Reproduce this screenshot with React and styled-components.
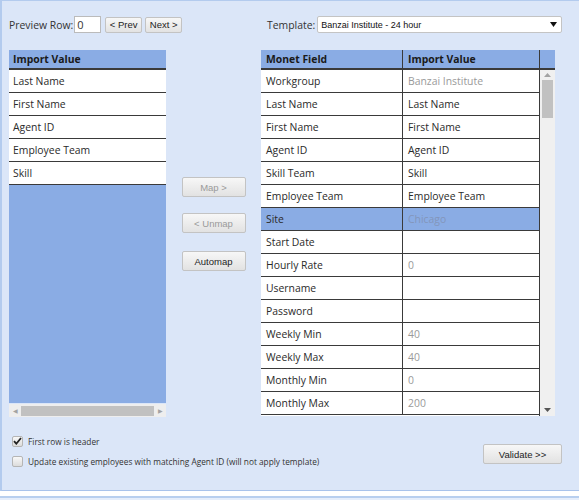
import React from "react";
import styled, { createGlobalStyle } from "styled-components";

const Global = createGlobalStyle`
  html, body { margin: 0; padding: 0; background: #ffffff; }
  body { font-family: "Open Sans", "Noto Sans", sans-serif; font-size: 10.4px; color: #333; }
`;

const Page = styled.div`
  width: 579px;
  height: 500px;
  overflow: hidden;
`;

const Panel = styled.div`
  box-sizing: border-box;
  height: 491px;
  background: #dbe6f8;
  border-top: 1px solid #b3cbee;
  border-left: 2px solid #b3cbee;
  border-bottom: 1px solid #a9c3eb;
  padding: 15px 0 0 7px;
`;

const FootLine = styled.div`
  margin-top: 5px;
  border-top: 2px solid #b8cfef;
  height: 3px;
  background: #e6eefb;
`;

const TopBar = styled.div`
  display: flex;
  align-items: center;
  height: 17px;
`;

const Label = styled.span`
  color: #333;
  font-size: 10.4px;
  margin-right: ${(p) => p.$gap || 3}px;
`;

const RowInput = styled.div`
  box-sizing: border-box;
  width: 27px;
  height: 17px;
  background: #fff;
  border: 1px solid #bbb;
  font-size: 11px;
  line-height: 15px;
  padding-left: 2px;
  margin-right: 4px;
`;

const Btn = styled.button`
  box-sizing: border-box;
  flex-shrink: 0;
  width: ${(p) => p.$w}px;
  height: ${(p) => p.$h || 20}px;
  margin-right: ${(p) => p.$mr || 0}px;
  margin-top: ${(p) => p.$mt || 0}px;
  padding: 0;
  font-family: "Liberation Sans", Arial, sans-serif;
  font-size: 9.5px;
  color: ${(p) => (p.$dim ? "#9a9a9a" : "#222")};
  background: linear-gradient(#f7f7f7, #e2e2e2);
  border: 1px solid #c3c3c3;
  border-radius: 2px;
`;

const LeftTop = styled.div`
  display: flex;
  align-items: center;
  width: 258px;
  flex-shrink: 0;
`;

const Select = styled.div`
  box-sizing: border-box;
  flex-shrink: 0;
  width: 245px;
  height: 17px;
  display: flex;
  align-items: center;
  justify-content: space-between;
  background: #fff;
  border: 1px solid #c4c4c4;
  border-radius: 2px;
  padding: 0 4px 0 3px;
  font-family: "Liberation Sans", Arial, sans-serif;
  font-size: 9px;
  color: #111;
`;

const Main = styled.div`
  display: grid;
  grid-template-columns: 157px 95px 294px;
  margin-top: 17px;
`;

const LeftCol = styled.div`
  display: flex;
  flex-direction: column;
  height: 367px;
  background: #8aace4;
`;

const Head = styled.div`
  box-sizing: border-box;
  height: 20px;
  line-height: 18px;
  padding-left: 4px;
  font-weight: 700;
  color: #1a1a1a;
  background: #8aace4;
  border-bottom: 2px solid #3a3a3a;
`;

const Cell = styled.div`
  box-sizing: border-box;
  height: 23px;
  line-height: 22px;
  padding-left: ${(p) => p.$pl || 4}px;
  background: ${(p) => (p.$sel ? "#8aace4" : "#fff")};
  border-bottom: 1px solid #3a3a3a;
  color: ${(p) => (p.$dim ? (p.$sel ? "#8396bb" : "#9a9a9a") : "#2a2a2a")};
  white-space: nowrap;
  overflow: hidden;
`;

const Filler = styled.div`
  flex: 1;
`;

const HScroll = styled.div`
  display: flex;
  align-items: center;
  height: 13px;
  background: #eeeeee;
  border-top: 1px solid #dbe6f8;
`;

const Arrow = styled.span`
  width: 12px;
  text-align: center;
  font-size: 6px;
  color: #a3a3a3;
`;

const HThumb = styled.div`
  flex: 1;
  height: 10px;
  background: #c1c1c1;
`;

const MidCol = styled.div`
  display: flex;
  flex-direction: column;
  align-items: center;
  padding-top: 127px;
`;

const RightCol = styled.div`
  display: flex;
  flex-direction: column;
  height: 366px;
`;

const RHead = styled.div`
  display: grid;
  grid-template-columns: 142px 137px 15px;
  height: 20px;
  background: #8aace4;
  border-bottom: 2px solid #3a3a3a;
  box-sizing: border-box;
  font-weight: 700;
  color: #1a1a1a;
  line-height: 18px;
`;

const HCell = styled.div`
  padding-left: 5px;
  border-right: ${(p) => (p.$last ? "none" : "1px solid #3a3a3a")};
`;

const Body = styled.div`
  display: flex;
  flex: 1;
  overflow: hidden;
`;

const Rows = styled.div`
  width: 279px;
  background: #fff;
  border-right: 1px solid #3a3a3a;
  box-sizing: border-box;
`;

const Row = styled.div`
  display: grid;
  grid-template-columns: 142px 136px;
  box-shadow: ${(p) => (p.$sel ? "inset 1px 1px 0 #222, inset 0 2px 0 #222" : "none")};
  & > div:first-child {
    border-right: 1px solid #3a3a3a;
  }
`;

const VScroll = styled.div`
  display: flex;
  flex-direction: column;
  align-items: center;
  width: 15px;
  background: #f0f0f0;
  padding-top: 3px;
`;

const VThumb = styled.div`
  width: 11px;
  height: 38px;
  margin-top: 3px;
  background: #c1c1c1;
`;

const Checks = styled.div`
  display: flex;
  align-items: flex-start;
  justify-content: space-between;
  margin-top: 17px;
  padding-right: 17px;
`;

const CheckList = styled.div`
  display: flex;
  flex-direction: column;
  gap: 6px;
  padding-left: 3px;
`;

const CheckRow = styled.label`
  display: flex;
  align-items: center;
  height: 14px;
  font-size: 8.3px;
  color: #333;
`;

const Box = styled.span`
  box-sizing: border-box;
  width: 11px;
  height: 11px;
  margin-right: 5px;
  border: 1px solid #b5b5b5;
  border-radius: 2px;
  background: linear-gradient(#f8f8f8, #dcdcdc);
  display: flex;
  align-items: center;
  justify-content: center;
`;

const ValidateWrap = styled.div`
  padding-top: 10px;
`;

const leftRows = ["Last Name", "First Name", "Agent ID", "Employee Team", "Skill"];

const fields = [
  ["Workgroup", "Banzai Institute", true],
  ["Last Name", "Last Name"],
  ["First Name", "First Name"],
  ["Agent ID", "Agent ID"],
  ["Skill Team", "Skill"],
  ["Employee Team", "Employee Team"],
  ["Site", "Chicago", true, true],
  ["Start Date", ""],
  ["Hourly Rate", "0", true],
  ["Username", ""],
  ["Password", ""],
  ["Weekly Min", "40", true],
  ["Weekly Max", "40", true],
  ["Monthly Min", "0", true],
  ["Monthly Max", "200", true],
];

export default function App() {
  return (
    <Page>
      <Global />
      <Panel>
        <TopBar>
          <LeftTop>
            <Label $gap={1}>Preview Row:</Label>
            <RowInput>0</RowInput>
            <Btn $w={37} $h={16} $mr={3}>&lt; Prev</Btn>
            <Btn $w={37} $h={16}>Next &gt;</Btn>
          </LeftTop>
          <Label $gap={2}>Template:</Label>
          <Select>
            <span>Banzai Institute - 24 hour</span>
            <svg width="7" height="5" viewBox="0 0 7 5">
              <path d="M0 0h7L3.5 5z" fill="#111" />
            </svg>
          </Select>
        </TopBar>

        <Main>
          <LeftCol>
            <Head>Import Value</Head>
            {leftRows.map((r) => (
              <Cell key={r}>{r}</Cell>
            ))}
            <Filler />
            <HScroll>
              <Arrow>◀</Arrow>
              <HThumb />
              <Arrow>▶</Arrow>
            </HScroll>
          </LeftCol>

          <MidCol>
            <Btn $w={64} $dim>Map &gt;</Btn>
            <Btn $w={64} $dim $mt={16}>&lt; Unmap</Btn>
            <Btn $w={64} $mt={18}>Automap</Btn>
          </MidCol>

          <RightCol>
            <RHead>
              <HCell>Monet Field</HCell>
              <HCell>Import Value</HCell>
              <HCell $last />
            </RHead>
            <Body>
              <Rows>
                {fields.map(([f, v, dim, sel]) => (
                  <Row key={f} $sel={sel}>
                    <Cell $pl={5} $sel={sel}>{f}</Cell>
                    <Cell $pl={5} $sel={sel} $dim={dim}>{v}</Cell>
                  </Row>
                ))}
              </Rows>
              <VScroll>
                <svg width="7" height="4" viewBox="0 0 7 4">
                  <path d="M0 4h7L3.5 0z" fill="#a3a3a3" />
                </svg>
                <VThumb />
                <Filler />
                <svg width="7" height="4" viewBox="0 0 7 4" style={{ marginBottom: 4 }}>
                  <path d="M0 0h7L3.5 4z" fill="#555" />
                </svg>
              </VScroll>
            </Body>
          </RightCol>
        </Main>

        <Checks>
          <CheckList>
            <CheckRow>
              <Box>
                <svg width="9" height="8" viewBox="0 0 9 8">
                  <path d="M1 4.2l2.3 2.5L8 1" stroke="#222" strokeWidth="1.8" fill="none" />
                </svg>
              </Box>
              First row is header
            </CheckRow>
            <CheckRow>
              <Box />
              Update existing employees with matching Agent ID (will not apply template)
            </CheckRow>
          </CheckList>
          <ValidateWrap>
            <Btn $w={79}>Validate &gt;&gt;</Btn>
          </ValidateWrap>
        </Checks>
      </Panel>
      <FootLine />
    </Page>
  );
}
